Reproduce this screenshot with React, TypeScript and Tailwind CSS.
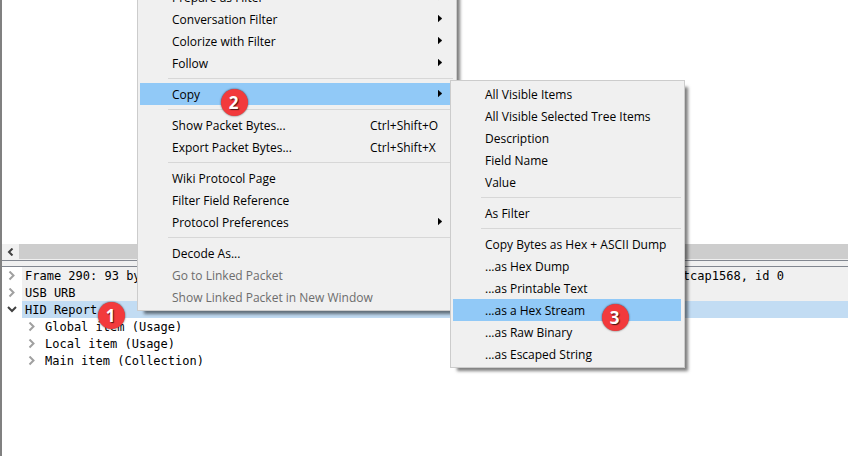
import { Fragment } from "react";
import type { ReactNode } from "react";

type Entry = {
  label: string;
  shortcut?: string;
  submenu?: boolean;
  active?: boolean;
  disabled?: boolean;
};

const packetMenu: Entry[][] = [
  [
    { label: "Prepare as Filter", submenu: true },
    { label: "Conversation Filter", submenu: true },
    { label: "Colorize with Filter", submenu: true },
    { label: "Follow", submenu: true },
  ],
  [{ label: "Copy", submenu: true, active: true }],
  [
    { label: "Show Packet Bytes...", shortcut: "Ctrl+Shift+O" },
    { label: "Export Packet Bytes...", shortcut: "Ctrl+Shift+X" },
  ],
  [
    { label: "Wiki Protocol Page" },
    { label: "Filter Field Reference" },
    { label: "Protocol Preferences", submenu: true },
  ],
  [
    { label: "Decode As..." },
    { label: "Go to Linked Packet", disabled: true },
    { label: "Show Linked Packet in New Window", disabled: true },
  ],
];

const copyMenu: Entry[][] = [
  [
    { label: "All Visible Items" },
    { label: "All Visible Selected Tree Items" },
    { label: "Description" },
    { label: "Field Name" },
    { label: "Value" },
  ],
  [{ label: "As Filter" }],
  [
    { label: "Copy Bytes as Hex + ASCII Dump" },
    { label: "...as Hex Dump" },
    { label: "...as Printable Text" },
    { label: "...as a Hex Stream", active: true },
    { label: "...as Raw Binary" },
    { label: "...as Escaped String" },
  ],
];

function Menu({ groups, className, label }: { groups: Entry[][]; className: string; label: string }) {
  return (
    <div
      role="menu"
      aria-label={label}
      className={`absolute border border-[#cccccc] bg-[#f0f0f0] py-[2px] pr-[3px] pl-[2px] font-['Open_Sans','Noto_Sans',sans-serif] text-[12px] shadow-[5px_5px_3px_-2px_rgba(0,0,0,0.5)] ${className}`}
    >
      {groups.map((group, i) => (
        <Fragment key={i}>
          {i > 0 && <hr className="my-1 ml-7 border-t border-[#d7d7d7]" />}
          {group.map((entry) => (
            <button
              key={entry.label}
              type="button"
              role="menuitem"
              disabled={entry.disabled}
              className={`flex h-[22px] w-full items-center pr-[11px] pl-8 text-left leading-5 whitespace-nowrap ${
                entry.active ? "bg-[#91c9f7]" : ""
              } ${entry.disabled ? "text-[#6d6d6d]" : "text-black"}`}
            >
              <span className="grow pt-[2px]">{entry.label}</span>
              {entry.shortcut && <span className="w-[72px] pt-[2px]">{entry.shortcut}</span>}
              {entry.submenu && (
                <svg width="4" height="8" viewBox="0 0 4 8" aria-hidden="true">
                  <path d="M0 0L4 3.5L0 7Z" fill="#000" stroke="#000" strokeWidth="0.3" />
                </svg>
              )}
            </button>
          ))}
        </Fragment>
      ))}
    </div>
  );
}

function Chevron({ open }: { open?: boolean }) {
  return (
    <svg width="10" height="10" viewBox="0 0 10 10" fill="none" strokeWidth="2" aria-hidden="true">
      {open ? <path d="M1 2L5 6L9 2" stroke="#404040" /> : <path d="M2.5 0.5L6.5 4.5L2.5 8.5" stroke="#a0a0a0" />}
    </svg>
  );
}

function TreeRow({
  children,
  open,
  nested,
  className = "",
}: {
  children: ReactNode;
  open?: boolean;
  nested?: boolean;
  className?: string;
}) {
  return (
    <div role="treeitem" aria-expanded={!!open} className={`flex h-[17px] items-center ${nested ? "pl-5" : ""}`}>
      <div className="flex w-5 shrink-0 justify-center">
        <Chevron open={open} />
      </div>
      <div className={`flex h-full grow justify-between pl-[3px] leading-[18px] whitespace-nowrap ${className}`}>
        {children}
      </div>
    </div>
  );
}

function Badge({ n, className }: { n: number; className: string }) {
  return (
    <div
      className={`absolute flex size-[27px] items-center justify-center rounded-full bg-[#f23a3c] pr-[2px] font-['Open_Sans',sans-serif] text-[17px] leading-none font-bold text-white shadow-[0_0_2px_rgba(0,0,0,0.7)] [text-shadow:1px_1px_1px_rgba(0,0,0,0.7)] ${className}`}
    >
      {n}
    </div>
  );
}

export default function App() {
  return (
    <main className="relative flex min-h-screen w-full flex-col overflow-hidden border-l-2 border-[#808080] bg-white text-black">
      <section aria-label="Packet list" className="h-[244px]" />
      <div className="flex h-4 bg-[#f0f0f0] pb-px">
        <button type="button" aria-label="Scroll left" className="flex w-[17px] items-center justify-center">
          <svg width="8" height="8" viewBox="0 0 8 8" fill="none" aria-hidden="true">
            <path d="M5.5 0.5L2 4L5.5 7.5" stroke="#404040" strokeWidth="2" />
          </svg>
        </button>
        <div className="grow bg-[#cdcdcd]" />
      </div>
      <div className="h-[7px] border-y border-[#828790] bg-[#f0f0f0]" />
      <section
        role="tree"
        aria-label="Packet details"
        className="font-['DejaVu_Sans_Mono',monospace] text-[12px]"
      >
        <TreeRow className="bg-[#f0f0f0] pr-16">
          <span>Frame 290: 93 by</span>
          <span>tcap1568, id 0</span>
        </TreeRow>
        <TreeRow className="bg-[#f0f0f0]">USB URB</TreeRow>
        <TreeRow open className="bg-[#c2dcf3]">
          HID Report
        </TreeRow>
        <TreeRow nested>Global item (Usage)</TreeRow>
        <TreeRow nested>Local item (Usage)</TreeRow>
        <TreeRow nested>Main item (Collection)</TreeRow>
      </section>
      <Menu label="Packet" groups={packetMenu} className="top-[-17px] left-[135px] w-80" />
      <Menu label="Copy" groups={copyMenu} className="top-20 left-[448px] w-[235px]" />
      <Badge n={1} className="top-[302px] left-24" />
      <Badge n={2} className="top-[89px] left-[219px]" />
      <Badge n={3} className="top-[304px] left-[600px]" />
    </main>
  );
}
